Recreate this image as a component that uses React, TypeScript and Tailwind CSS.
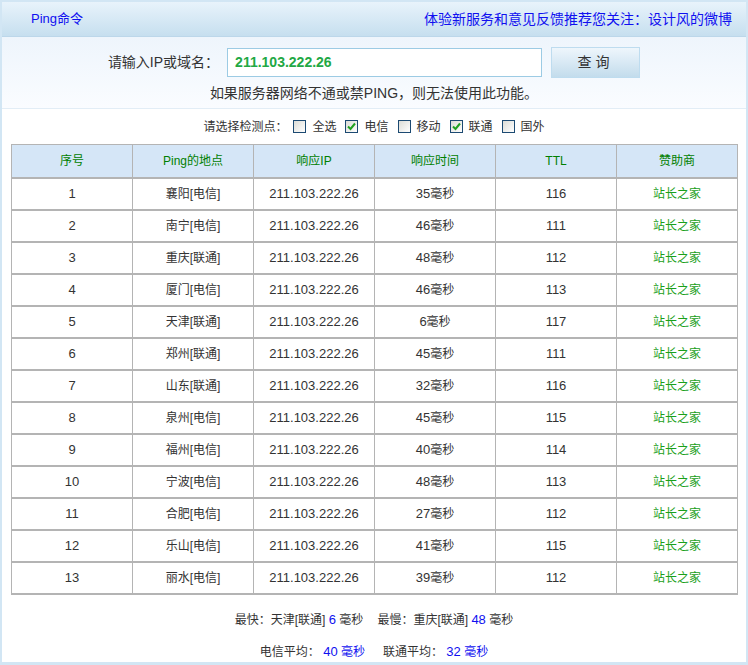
import React from "react";

const rows = [
  ["1", "襄阳[电信]", "35", "116"],
  ["2", "南宁[电信]", "46", "111"],
  ["3", "重庆[联通]", "48", "112"],
  ["4", "厦门[电信]", "46", "113"],
  ["5", "天津[联通]", "6", "117"],
  ["6", "郑州[联通]", "45", "111"],
  ["7", "山东[联通]", "32", "116"],
  ["8", "泉州[电信]", "45", "115"],
  ["9", "福州[电信]", "40", "114"],
  ["10", "宁波[电信]", "48", "113"],
  ["11", "合肥[电信]", "27", "112"],
  ["12", "乐山[电信]", "41", "115"],
  ["13", "丽水[电信]", "39", "112"],
];

const points = [
  { label: "全选", checked: false },
  { label: "电信", checked: true },
  { label: "移动", checked: false },
  { label: "联通", checked: true },
  { label: "国外", checked: false },
];

const Box = ({ checked }: { checked: boolean }) => (
  <span className="w-[13px] h-[13px] border border-[#1c4a72] bg-gradient-to-br from-[#dcdcd6] to-white flex items-center justify-center">
    {checked && (
      <svg width="9" height="9" viewBox="0 0 9 9">
        <path d="M1 4.5 L3.5 7 L8 1.5" stroke="#21a121" strokeWidth="2" fill="none" />
      </svg>
    )}
  </span>
);

export default function App() {
  return (
    <div
      className="w-[748px] h-[665px] border-x-2 border-b-[3px] border-t-2 border-[#d2e6f4] bg-white text-[12px] text-[#333]"
      style={{ fontFamily: '"Liberation Sans", "Noto Sans CJK SC", sans-serif' }}
    >
      <div className="h-[35px] bg-gradient-to-b from-[#e8f3fb] to-[#c6dfef] border-b border-[#bcd7ea] flex items-center justify-between pl-[29px] pr-[14px] text-[#1010f0]">
        <span className="text-[13px]">Ping命令</span>
        <span className="text-[14px]">体验新服务和意见反馈推荐您关注：设计风的微博</span>
      </div>
      <div className="h-[72px] bg-gradient-to-b from-[#eef5fc] to-[#fafcff] border-b border-[#e2edf6] flex flex-col items-center pt-[10px]">
        <div className="flex items-center">
          <span className="text-[14px] mr-[8px]">请输入IP或域名：</span>
          <div className="w-[315px] h-[29px] border border-[#9ccbe4] bg-white flex items-center pl-[7px] text-[14px] font-bold text-[#22a844]">
            211.103.222.26
          </div>
          <div className="ml-[9px] w-[89px] h-[31px] border border-[#bedcef] bg-gradient-to-b from-[#eef6fc] to-[#c3dcec] flex items-center justify-center text-[14px] tracking-[4px]">
            查询
          </div>
        </div>
        <div className="mt-[5px] text-[14px]">如果服务器网络不通或禁PING，则无法使用此功能。</div>
      </div>
      <div className="h-[35px] flex items-center justify-center">
        <span className="mr-[6px]">请选择检测点：</span>
        {points.map((p) => (
          <span key={p.label} className="flex items-center mr-[9px] last:mr-0">
            <Box checked={p.checked} />
            <span className="ml-[6px]">{p.label}</span>
          </span>
        ))}
      </div>
      <table className="ml-[9px] w-[727px] border-collapse table-fixed">
        <thead>
          <tr className="h-[33px] bg-[#d5e6f7] text-[#008000]">
            {["序号", "Ping的地点", "响应IP", "响应时间", "TTL", "赞助商"].map((h) => (
              <th key={h} className="font-normal border border-[#b4b4b4] border-b-2">
                {h}
              </th>
            ))}
          </tr>
        </thead>
        <tbody>
          {rows.map((r) => (
            <tr key={r[0]} className="h-[32px] text-center">
              <td className="border border-[#b4b4b4] border-b-2 text-[13px]">{r[0]}</td>
              <td className="border border-[#b4b4b4] border-b-2">{r[1]}</td>
              <td className="border border-[#b4b4b4] border-b-2 text-[13px]">211.103.222.26</td>
              <td className="border border-[#b4b4b4] border-b-2">
                <span className="text-[13px]">{r[2]}</span>毫秒
              </td>
              <td className="border border-[#b4b4b4] border-b-2 text-[13px]">{r[3]}</td>
              <td className="border border-[#b4b4b4] border-b-2 text-[#1aa01a]">站长之家</td>
            </tr>
          ))}
        </tbody>
      </table>
      <div className="mt-[15px] flex justify-center">
        <span>
          最快：天津[联通] <span className="text-[#1010f0] text-[13px]">6</span> 毫秒
        </span>
        <span className="ml-[14px]">
          最慢：重庆[联通] <span className="text-[#1010f0] text-[13px]">48</span> 毫秒
        </span>
      </div>
      <div className="mt-[13px] flex justify-center">
        <span>
          电信平均： <span className="text-[#1010f0]"><span className="text-[13px]">40</span> 毫秒</span>
        </span>
        <span className="ml-[18px]">
          联通平均： <span className="text-[#1010f0]"><span className="text-[13px]">32</span> 毫秒</span>
        </span>
      </div>
    </div>
  );
}
